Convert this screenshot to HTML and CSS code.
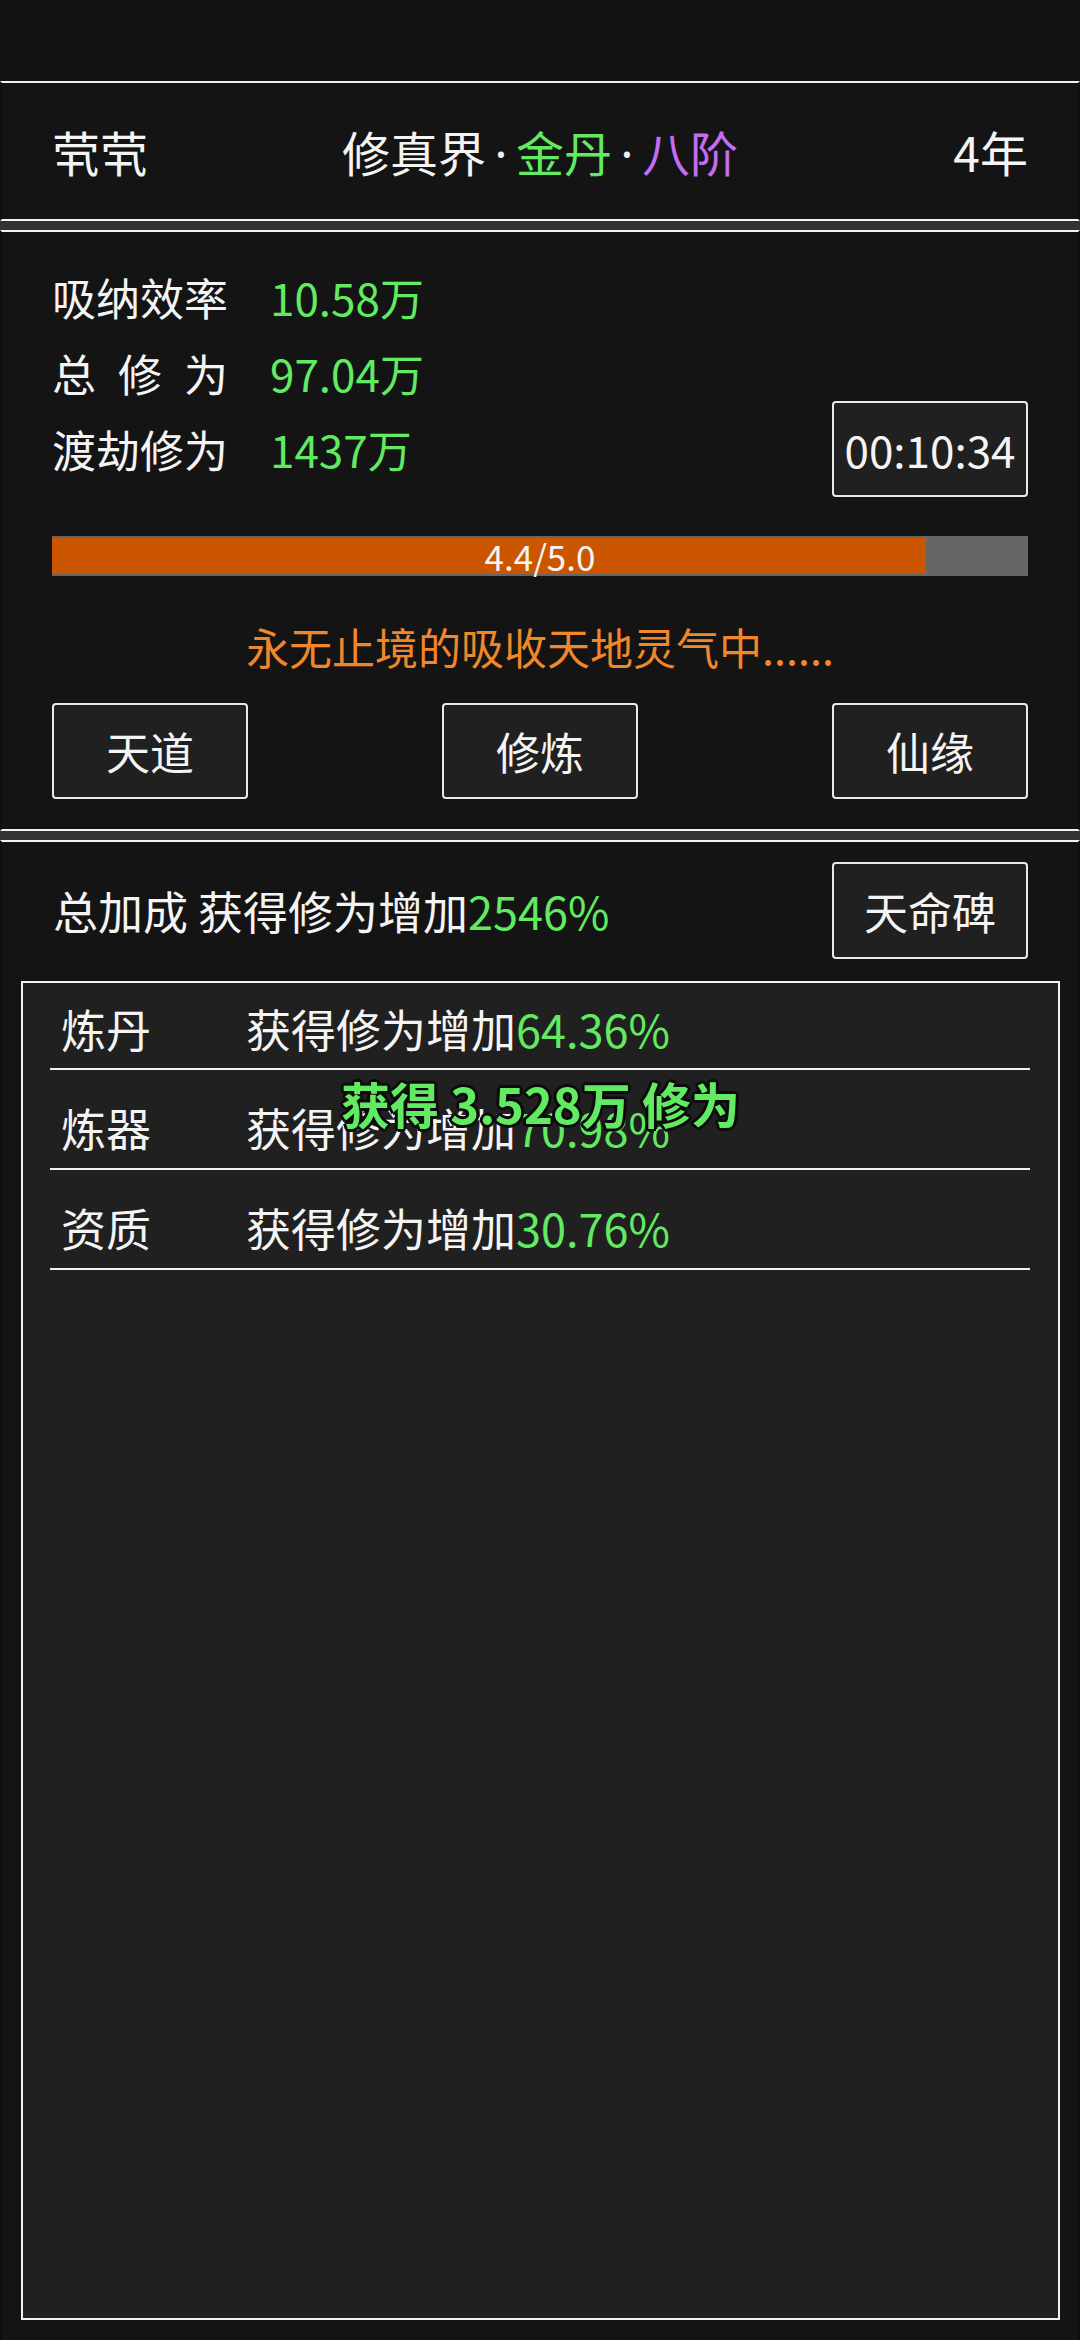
FILE: index.html
```html
<!doctype html>
<html>
<head>
<meta charset="UTF-8">
<title>修真界</title>
<link rel="stylesheet" href="styles.css">
</head>
<body>
<div class="status-bar"></div>

<div class="panels">
	<!-- 顶部：名字 / 境界 / 年份 -->
	<div class="panel head">
		<span class="head-name">茕茕</span>
		<span class="head-realm">修真界<span class="dot">·</span><span class="green">金丹</span><span class="dot">·</span><span class="purple">八阶</span></span>
		<span class="head-year">4年</span>
	</div>

	<!-- 修炼信息 -->
	<div class="panel stats">
		<div class="stat-row">
			<span class="stat-label">吸纳效率</span>
			<span class="green">10.58万</span>
		</div>
		<div class="stat-row">
			<span class="stat-label">总修为</span>
			<span class="green">97.04万</span>
		</div>
		<div class="stat-row">
			<span class="stat-label">渡劫修为</span>
			<span class="green">1437万</span>
			<div class="timer">00:10:34</div>
		</div>

		<div class="bar">
			<div class="bar-fill" style="width: 89.6%"></div>
			<div class="bar-text">4.4/5.0</div>
		</div>

		<div class="message">永无止境的吸收天地灵气中......</div>

		<div class="btn-row">
			<div class="btn">天道</div>
			<div class="btn">修炼</div>
			<div class="btn">仙缘</div>
		</div>
	</div>

	<!-- 加成列表 -->
	<div class="panel bonus">
		<div class="bonus-head">
			<span>总加成 获得修为增加<span class="green">2546%</span></span>
			<div class="btn">天命碑</div>
		</div>

		<div class="bonus-box">
			<div class="bonus-list">
				<div class="bonus-item">
					<span class="bonus-name">炼丹</span>
					<span>获得修为增加<span class="green">64.36%</span></span>
				</div>
				<div class="bonus-item">
					<span class="bonus-name">炼器</span>
					<span>获得修为增加<span class="green">70.98%</span></span>
				</div>
				<div class="bonus-item">
					<span class="bonus-name">资质</span>
					<span>获得修为增加<span class="green">30.76%</span></span>
				</div>
			</div>
			<div class="gain-tip">获得 3.528万 修为</div>
		</div>
	</div>
</div>
</body>
</html>
```

FILE: styles.css
```css
* {
	box-sizing: border-box;
}

body {
	margin: 0;
	width: 1080px;
	height: 2340px;
	overflow: hidden;
	background: #111111;
	color: #f4f4f4;
	font-family: "Noto Sans CJK SC", "Noto Sans", sans-serif;
	font-size: 44px;
}

.status-bar {
	height: 81px;
	background: #111111;
}

.panels {
	display: flex;
	flex-direction: column;
	gap: 9px;
	background: #333333;
}

.panel {
	background: #141414;
	border-top: 2px solid #f2f2f2;
	border-bottom: 2px solid #f2f2f2;
	border-left: 2px solid #0e0e0e;
	border-right: 2px solid #0e0e0e;
}

.green {
	color: #62ea62;
}

.purple {
	color: #c46cf2;
}

/* 顶部 */
.head {
	height: 140px;
	display: grid;
	grid-template-columns: 1fr auto 1fr;
	align-items: center;
	padding: 0 50px 0 50px;
	font-size: 48px;
}

.head-name {
	justify-self: start;
}

.head-year {
	justify-self: end;
}

.dot {
	display: inline-block;
	width: 30px;
	text-align: center;
	font-family: "Noto Sans", sans-serif;
}

/* 修炼信息 */
.stats {
	height: 601px;
	padding: 27px 50px 0 50px;
}

.stat-row {
	height: 76px;
	display: flex;
	align-items: center;
}

.stat-label {
	width: 176px;
	margin-right: 42px;
	text-align-last: justify;
}

.timer {
	margin-left: auto;
	width: 196px;
	height: 96px;
	display: flex;
	align-items: center;
	justify-content: center;
	background: #202020;
	border: 2px solid #e8e8e8;
	border-radius: 4px;
}

.bar {
	position: relative;
	margin-top: 49px;
	height: 40px;
	padding: 2px 0;
	background: #666666;
}

.bar-fill {
	height: 100%;
	background: #cc5500;
}

.bar-text {
	position: absolute;
	left: 0;
	right: 0;
	top: 0;
	line-height: 40px;
	text-align: center;
	font-size: 35px;
}

.message {
	margin-top: 40px;
	line-height: 60px;
	text-align: center;
	font-size: 43px;
	color: #f0872a;
}

.btn-row {
	margin-top: 27px;
	display: flex;
	justify-content: space-between;
}

.btn {
	width: 196px;
	height: 96px;
	display: flex;
	align-items: center;
	justify-content: center;
	background: #202020;
	border: 2px solid #e8e8e8;
	border-radius: 4px;
}

/* 加成 */
.bonus {
	height: 1520px;
	padding-top: 20px;
}

.bonus-head {
	height: 97px;
	display: flex;
	align-items: center;
	justify-content: space-between;
	padding: 0 50px 0 51px;
	font-size: 45px;
}

.bonus-head .btn {
	height: 97px;
	font-size: 44px;
}

.bonus-box {
	position: relative;
	margin: 22px 18px 0 19px;
	height: 1339px;
	background: #202020;
	border: 2px solid #f2f2f2;
}

.bonus-list {
	margin: 0 28px 0 27px;
}

.bonus-item {
	display: flex;
	align-items: center;
	height: 100px;
	padding: 17px 0 0 11px;
	border-bottom: 2px solid #f2f2f2;
	font-size: 45px;
}

.bonus-item:first-child {
	height: 87px;
	padding-top: 5px;
}

.bonus-name {
	width: 185px;
}

.gain-tip {
	position: absolute;
	left: 0;
	right: 0;
	top: 90px;
	line-height: 60px;
	text-align: center;
	font-size: 49px;
	font-weight: bold;
	color: #62ea62;
	text-shadow: -2px -2px 0 #0c0c0c, 2px -2px 0 #0c0c0c, -2px 2px 0 #0c0c0c, 2px 2px 0 #0c0c0c, 0 3px 0 #0c0c0c, 0 -3px 0 #0c0c0c, 3px 0 0 #0c0c0c, -3px 0 0 #0c0c0c;
}
```
